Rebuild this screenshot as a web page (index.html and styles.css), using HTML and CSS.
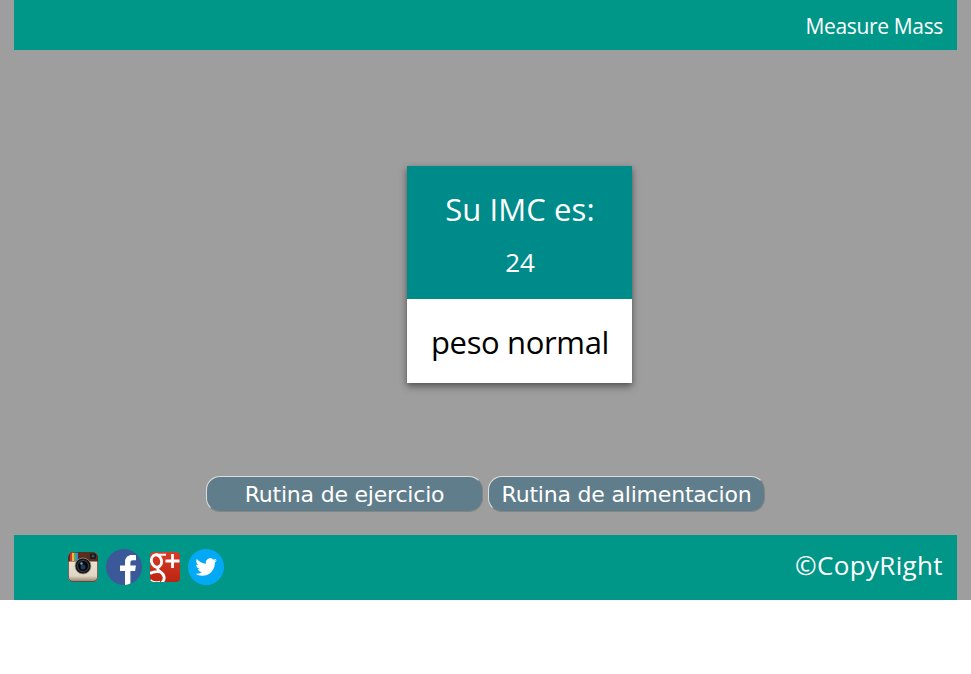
FILE: index.html
```html
<!DOCTYPE html>
<html lang="es">
<head>
<meta charset="utf-8">
<title>Measure Mass</title>
<link rel="stylesheet" href="styles.css">
</head>
<body>
<div class="page">
  <header class="bar top"><span class="brand">Measure Mass</span></header>
  <main class="content">
    <section class="card">
      <div class="card-head">
        <h1 class="title">Su IMC es:</h1>
        <p class="value">24</p>
      </div>
      <p class="status">peso normal</p>
    </section>
    <div class="actions">
      <button class="btn exercise">Rutina de ejercicio</button>
      <button class="btn food">Rutina de alimentacion</button>
    </div>
  </main>
  <footer class="bar bottom">
    <div class="social">
      <svg class="icon" viewBox="0 0 36 36">
        <defs>
          <linearGradient id="body" x1="0" y1="0" x2="0" y2="1"><stop offset="0" stop-color="#f3ebde"/><stop offset=".8" stop-color="#e0d5c3"/><stop offset="1" stop-color="#8d7a66"/></linearGradient>
          <linearGradient id="red" x1="0" y1="0" x2="0" y2="1"><stop offset="0" stop-color="#d93b27"/><stop offset="1" stop-color="#bb2413"/></linearGradient>
          <clipPath id="cam"><rect x="3" y="3" width="30" height="30" rx="5"/></clipPath>
          <clipPath id="tile"><rect x="3" y="3" width="30" height="30" rx="4"/></clipPath>
        </defs>
        <g clip-path="url(#cam)">
          <rect x="3" y="3" width="30" height="30" fill="url(#body)"/>
          <rect x="3" y="3" width="30" height="9.500" fill="#5b2c20"/>
          <path d="M5 3h2v9H5z" fill="#d9342b"/><path d="M7 3h2v9H7z" fill="#f0b93a"/><path d="M9 3h2v9H9z" fill="#59a861"/><path d="M11 3h2v9h-2z" fill="#3b8fc9"/>
          <rect x="25" y="4.500" width="6" height="5.500" rx="1.500" fill="#17191d"/>
          <circle cx="28" cy="7" r="1.500" fill="#35506a"/>
        </g>
        <rect x="3.500" y="3.500" width="29" height="29" rx="4.500" fill="none" stroke="#493426" stroke-opacity=".7"/>
        <circle cx="18" cy="17" r="8" fill="#17181b" stroke="#a89c8b" stroke-width=".7"/>
        <circle cx="18" cy="17" r="5.500" fill="#05070b" stroke="#3b3f47"/>
        <circle cx="18" cy="18" r="2.500" fill="#1d3a58"/>
        <circle cx="16.500" cy="14.500" r="1.300" fill="#8c98a8"/>
      </svg>
      <svg class="icon" viewBox="0 0 36 36">
        <circle cx="18" cy="18" r="18" fill="#3b5998"/>
        <path d="M19 35.900V22h-5v-5.500h5V13c0-4.800 3-7 7.200-7 1.500 0 2.800.1 3.800.3v5h-3c-2 0-2.600 1-2.600 2.700v2.500h5.500l-.8 5.500h-4.700v12.500a18 18 0 0 1-5.400 1.400z" fill="#fff"/>
      </svg>
      <svg class="icon" viewBox="0 0 36 36">
        <rect x="3" y="3" width="30" height="30" rx="4" fill="url(#red)"/>
        <g fill="none" stroke="#fff" clip-path="url(#tile)">
          <ellipse cx="9.500" cy="12" rx="5" ry="6.300" stroke-width="2.800" transform="rotate(-14 9.500 12)"/>
          <path d="M9 5.700h10" stroke-width="2"/>
          <path d="M12.500 17c-3 2.500-2 4 1 6 4.500 3 5 7.500 1 11M3 24.500c3-2 7-2.300 11-1.500" stroke-width="2.800"/>
          <path d="M3 31c2 2.500 6 3 10 2" stroke-width="2.500"/>
          <path d="M25.500 5v14M18.500 12h14" stroke-width="2.800"/>
        </g>
      </svg>
      <svg class="icon" viewBox="0 0 36 36">
        <circle cx="18" cy="18" r="18" fill="#03a9f4"/>
        <path transform="translate(7.400 7.200) scale(.9)" d="M23.953 4.570a10 10 0 0 1-2.825.775 4.958 4.958 0 0 0 2.163-2.723c-.951.555-2.005.959-3.127 1.184a4.920 4.920 0 0 0-8.384 4.482C7.690 8.095 4.067 6.130 1.640 3.162a4.822 4.822 0 0 0-.666 2.475c0 1.710.870 3.213 2.188 4.096a4.904 4.904 0 0 1-2.228-.616v.060a4.923 4.923 0 0 0 3.946 4.827 4.996 4.996 0 0 1-2.212.085 4.936 4.936 0 0 0 4.604 3.417 9.867 9.867 0 0 1-6.102 2.105c-.390 0-.779-.023-1.170-.067a13.995 13.995 0 0 0 7.557 2.209c9.053 0 13.998-7.496 13.998-13.985 0-.210 0-.420-.015-.630A9.935 9.935 0 0 0 24 4.590z" fill="#fff"/>
      </svg>
    </div>
    <span class="copyright">©CopyRight</span>
  </footer>
</div>
</body>
</html>
```
FILE: styles.css
```css
* { box-sizing: border-box; }
body { margin: 0; background: #fff; font-family: "Open Sans", "Noto Sans", sans-serif; color: #fff; }
.page { height: 600px; padding: 0 14px; background: #9e9e9e; display: flex; flex-direction: column; }
.bar { background: #009688; display: flex; align-items: center; padding-right: 14px; }
.top { height: 50px; justify-content: flex-end; }
.brand { font-size: 21px; line-height: 30px; padding-top: 1px; letter-spacing: -0.35px; }
.content { flex: 1; display: flex; flex-direction: column; padding-top: 116px; }
.card { width: 225px; height: 217px; margin-left: 393px; background: #fff; text-align: center; box-shadow: 0 4px 8px rgba(0, 0, 0, .3), 0 2px 5px rgba(0, 0, 0, .25); }
.card-head { height: 133px; padding-top: 21px; background: #008b8b; }
.title { margin: 0; font-size: 31px; line-height: 44px; font-weight: 400; letter-spacing: 0.1px; padding-left: 1px; }
.value { margin: 12px 0 0; font-size: 26px; line-height: 38px; padding-left: 1px; }
.status { margin: 0; padding: 21px 0 0 1px; font-size: 31px; line-height: 44px; letter-spacing: -0.35px; color: #000; white-space: nowrap; }
.actions { display: flex; gap: 5px; margin: 93px 0 0 192px; }
.btn { width: 277px; height: 36px; padding: 1px 0 0; border: 1px solid; border-color: #dedede #858585 #858585 #dedede; border-radius: 14px; background: #607d8b; color: #fff; font: 22px/33px "DejaVu Sans", sans-serif; letter-spacing: -0.2px; white-space: nowrap; }
.bottom { height: 65px; justify-content: space-between; padding-left: 51px; }
.social { display: flex; gap: 5px; margin-top: -2px; }
.icon { display: block; width: 36px; height: 36px; }
.copyright { font-size: 26px; line-height: 36px; margin-top: -6px; letter-spacing: 0.35px; }
```
